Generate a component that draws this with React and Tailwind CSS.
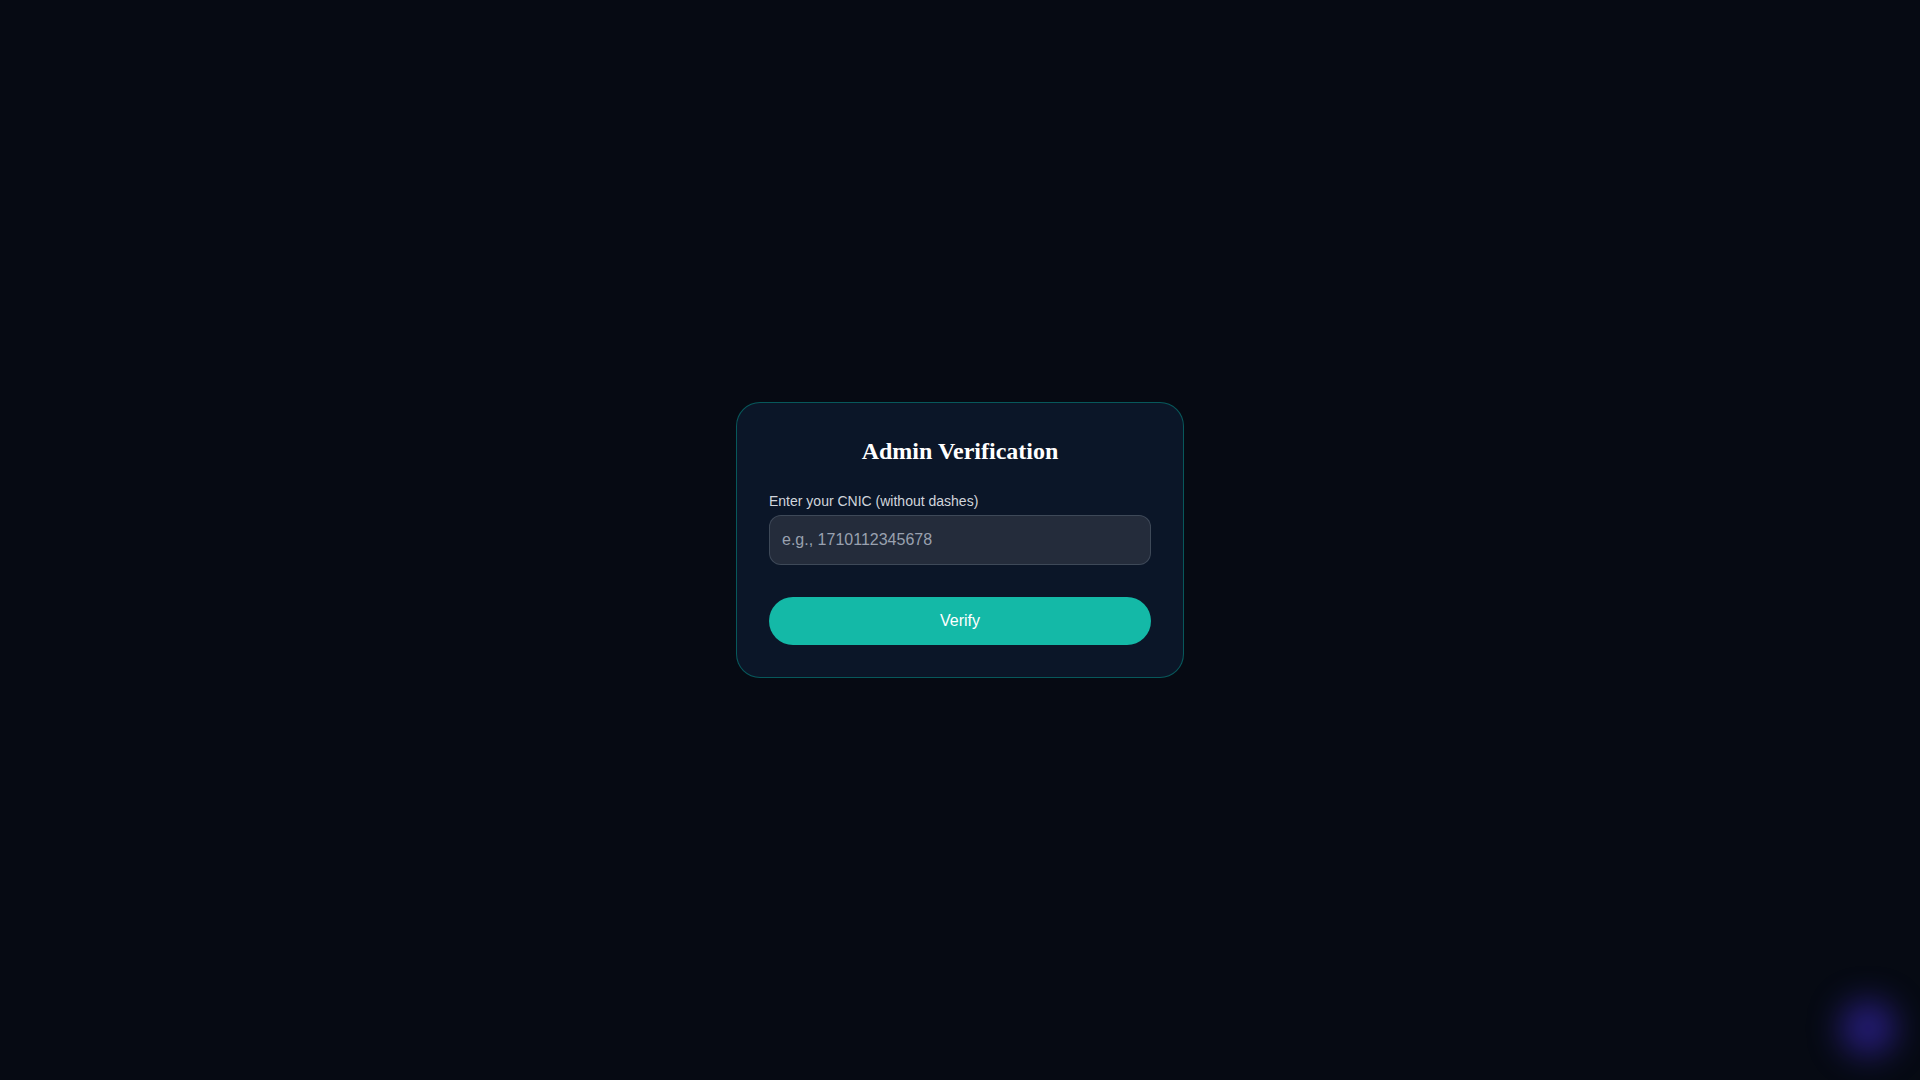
export default function App() {
  return (
    <div className="min-h-screen w-full bg-[#060a13] flex items-center justify-center" style={{ fontFamily: '"Liberation Sans", Arial, sans-serif' }}>
      <div className="w-[448px] rounded-3xl border border-teal-500/40 bg-[#0b1628] p-8">
        <h1 className="text-center text-2xl font-bold text-white" style={{ fontFamily: '"Liberation Serif", "Times New Roman", serif' }}>
          Admin Verification
        </h1>
        <label className="mt-6 block text-sm text-gray-300">Enter your CNIC (without dashes)</label>
        <input
          type="text"
          placeholder="e.g., 1710112345678"
          className="mt-1 block h-[50px] w-full rounded-xl border border-gray-600/70 bg-[#242c3b] px-3 text-base text-white placeholder:text-gray-400 outline-none"
        />
        <button className="mt-8 block h-12 w-full rounded-full bg-[#14b9a7] text-base text-white">
          Verify
        </button>
      </div>
      <div className="fixed bottom-6 right-6 h-14 w-14 rounded-full bg-indigo-700/50 blur-lg"></div>
    </div>
  );
}
